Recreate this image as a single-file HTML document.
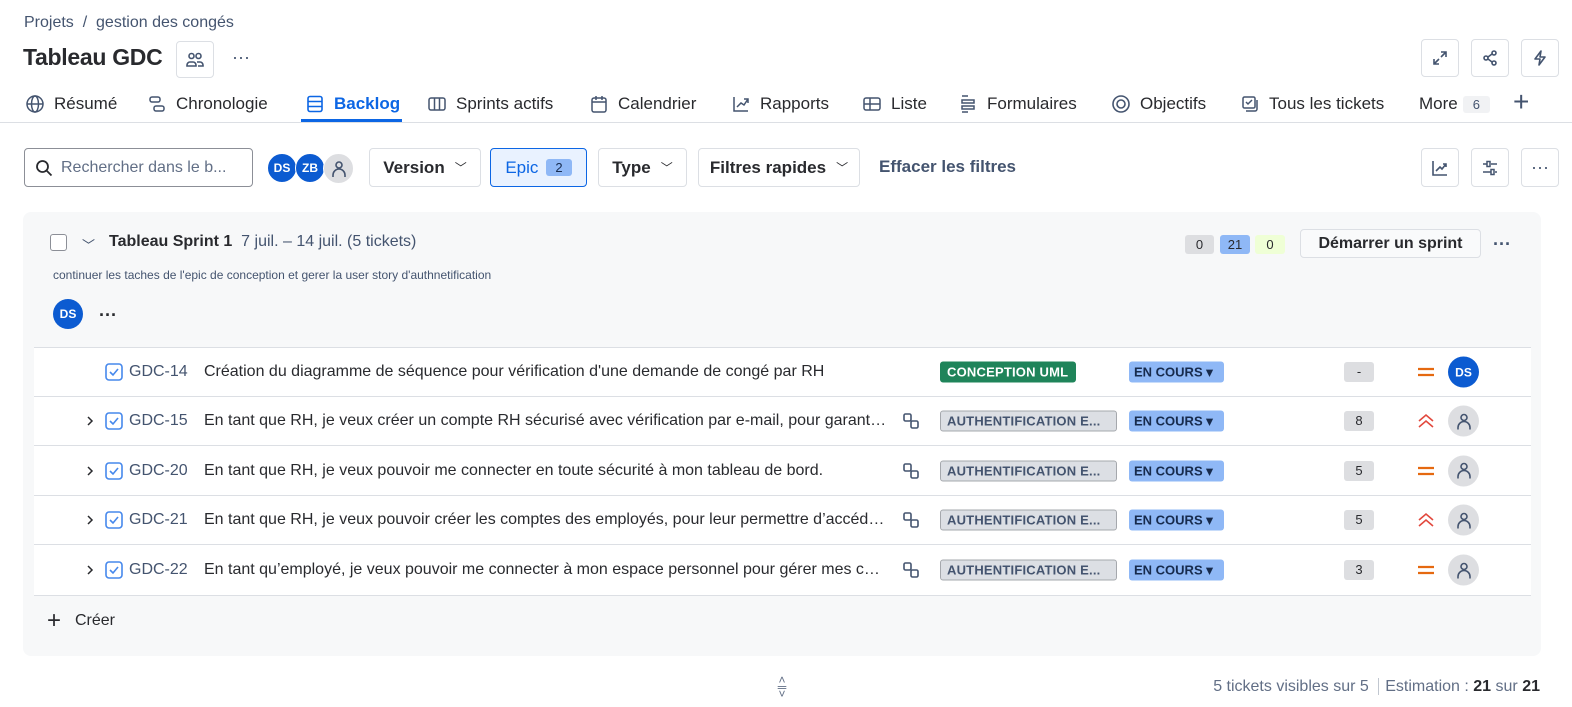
<!DOCTYPE html>
<html><head><meta charset="utf-8"><style>
*{box-sizing:border-box;margin:0;padding:0}
body{width:1572px;height:707px;overflow:hidden;background:#fff;font-family:"Segoe UI","Liberation Sans",sans-serif;color:#292a2e;position:relative;font-size:16px}
.a{position:absolute;white-space:nowrap}
.btn{position:absolute;border:1px solid #dcdfe4;border-radius:4px;background:#fff;display:flex;align-items:center;justify-content:center}
.tab{position:absolute;top:92px;height:24px;display:flex;align-items:center;font-size:17px;color:#292a2e;gap:9px}
.tab svg{width:20px;height:20px}
.av{position:absolute;border-radius:50%;background:#0c5bd1;color:#fff;font-weight:bold;font-size:12px;display:flex;align-items:center;justify-content:center}
.gp{position:absolute;border-radius:50%;background:#dddee1;display:flex;align-items:center;justify-content:center}
.row{position:absolute;left:34px;width:1497px;height:50px;border-bottom:1px solid #dcdfe4;background:#fff}
.row > *{position:absolute;top:50%;transform:translateY(-50%)}
.key{left:95px;font-size:16px;color:#44546f}
.sum{left:170px;font-size:16px;color:#292a2e;width:684px;overflow:hidden;text-overflow:ellipsis;white-space:nowrap}
.epic{left:906px;width:177px;height:21px;border:1px solid #a5a8ad;background:#dcdfe4;border-radius:3px;font-size:13px;font-weight:bold;color:#44546f;padding-left:6px;line-height:19px;letter-spacing:.2px}
.st{left:1095px;width:95px;height:21px;background:#8fb8f6;border-radius:3px;font-size:13px;font-weight:bold;color:#172b4d;padding-left:5px;line-height:21px}
.est{left:1310px;width:30px;height:20px;background:#dddee1;border-radius:3px;font-size:13px;text-align:center;line-height:20px;color:#292a2e}
.chev{left:50px}
.cb{left:71px}
.ch{left:868px}
.pr{left:1382px}
.pa{left:1414px;width:31px;height:31px}
</style></head><body>

<div class="a" style="left:24px;top:14px;font-size:16px;color:#44546f">Projets &nbsp;/&nbsp; gestion des congés</div>
<div class="a" style="left:23px;top:44px;font-size:23px;font-weight:bold;color:#292a2e;letter-spacing:-0.3px">Tableau GDC</div>
<div class="btn" style="left:176px;top:41px;width:38px;height:37px"><svg width="20" height="20" viewBox="0 0 20 20" fill="none" stroke="#44546f" stroke-width="1.6"><circle cx="6.5" cy="6" r="2.5"/><circle cx="13.5" cy="6" r="2.5"/><path d="M2 16v-1a3 3 0 0 1 3-3h3a3 3 0 0 1 3 3v1zM12 12h3a3 3 0 0 1 3 3v1h-5"/></svg></div>
<div class="a" style="left:232px;top:47px;font-size:18px;color:#44546f">···</div>

<div class="btn" style="left:1421px;top:39px;width:38px;height:38px"><svg width="18" height="18" viewBox="0 0 18 18" fill="none" stroke="#44546f" stroke-width="1.6"><path d="M10 3h5v5M15 3l-5 5M8 15H3v-5M3 15l5-5"/></svg></div>
<div class="btn" style="left:1471px;top:39px;width:38px;height:38px"><svg width="18" height="18" viewBox="0 0 18 18" fill="none" stroke="#44546f" stroke-width="1.6"><circle cx="13" cy="4" r="2"/><circle cx="5" cy="9" r="2"/><circle cx="13" cy="14" r="2"/><path d="M7 8l4-3M7 10l4 3"/></svg></div>
<div class="btn" style="left:1521px;top:39px;width:38px;height:38px"><svg width="18" height="18" viewBox="0 0 18 18" fill="none" stroke="#44546f" stroke-width="1.6" stroke-linejoin="round"><path d="M10 2L4 10h5l-1 6 6-8H9z"/></svg></div>

<!-- tabs -->
<div class="tab" style="left:25px"><svg viewBox="0 0 20 20" fill="none" stroke="#44546f" stroke-width="1.5"><circle cx="10" cy="10" r="8"/><ellipse cx="10" cy="10" rx="3.5" ry="8"/><path d="M2 10h16"/></svg>Résumé</div>
<div class="tab" style="left:147px"><svg viewBox="0 0 20 20" fill="none" stroke="#44546f" stroke-width="1.5"><rect x="3" y="3" width="10" height="5" rx="2"/><rect x="7" y="12" width="10" height="5" rx="2"/></svg>Chronologie</div>
<div class="tab" style="left:305px;color:#0c66e4;font-weight:600"><svg viewBox="0 0 20 20" fill="none" stroke="#0c66e4" stroke-width="1.6"><rect x="3" y="2.5" width="14" height="15" rx="2"/><path d="M3 7.5h14M3 12.5h14"/></svg>Backlog</div>
<div class="a" style="left:301px;top:119px;width:101px;height:3px;background:#0c66e4"></div>
<div class="tab" style="left:427px"><svg viewBox="0 0 20 20" fill="none" stroke="#44546f" stroke-width="1.5"><rect x="2" y="4" width="16" height="12" rx="2"/><path d="M7.5 4v12M12.5 4v12"/></svg>Sprints actifs</div>
<div class="tab" style="left:589px"><svg viewBox="0 0 20 20" fill="none" stroke="#44546f" stroke-width="1.5"><rect x="3" y="4" width="14" height="14" rx="2"/><path d="M3 8h14M7 2v4M13 2v4"/></svg>Calendrier</div>
<div class="tab" style="left:731px"><svg viewBox="0 0 20 20" fill="none" stroke="#44546f" stroke-width="1.5"><path d="M3 3v14h14M6 13l4-4 3 2 4-6M13 5h4v4"/></svg>Rapports</div>
<div class="tab" style="left:862px"><svg viewBox="0 0 20 20" fill="none" stroke="#44546f" stroke-width="1.5"><rect x="2" y="4" width="16" height="12" rx="2"/><path d="M2 10h16M8 4v12"/></svg>Liste</div>
<div class="tab" style="left:958px"><svg viewBox="0 0 20 20" fill="none" stroke="#44546f" stroke-width="1.5"><path d="M4 2h6M4 6h12v3H4zM4 12h12v3H4zM4 18h6"/></svg>Formulaires</div>
<div class="tab" style="left:1111px"><svg viewBox="0 0 20 20" fill="none" stroke="#44546f" stroke-width="1.6"><circle cx="10" cy="10" r="8"/><circle cx="10" cy="10" r="4"/></svg>Objectifs</div>
<div class="tab" style="left:1240px"><svg viewBox="0 0 20 20" fill="none" stroke="#44546f" stroke-width="1.5"><rect x="3" y="3" width="12" height="11" rx="1.5"/><path d="M6 8l2 2 4-4M6 17h9a2 2 0 0 0 2-2V6"/></svg>Tous les tickets</div>
<div class="tab" style="left:1419px">More<span style="background:#f1f2f4;font-size:13px;color:#44546f;padding:1px 10px;border-radius:3px;margin-left:-4px">6</span></div>
<div class="a" style="left:1513px;top:88px;font-size:28px;font-weight:200;color:#44546f;line-height:28px">+</div>
<div class="a" style="left:0;top:122px;width:1572px;height:1px;background:#dcdfe4"></div>

<!-- filters -->
<div class="btn" style="left:24px;top:148px;width:229px;height:39px;border-color:#8c8f97;justify-content:flex-start;padding-left:10px;gap:8px;font-size:16px;color:#626f86"><svg width="18" height="18" viewBox="0 0 18 18" fill="none" stroke="#292a2e" stroke-width="1.8"><circle cx="7.5" cy="7.5" r="5.5"/><path d="M11.5 11.5l5 5"/></svg>Rechercher dans le b...</div>
<div class="av" style="left:267px;top:153px;width:30px;height:30px;border:1px solid #fff">DS</div>
<div class="av" style="left:295px;top:153px;width:30px;height:30px;border:1px solid #fff">ZB</div>
<div class="gp" style="left:323px;top:153px;width:31px;height:31px;border:1px solid #fff"><svg width="18" height="18" viewBox="0 0 18 18" fill="none" stroke="#44546f" stroke-width="1.6"><circle cx="9" cy="5" r="3"/><path d="M3 17v-2a6 6 0 0 1 12 0v2"/></svg></div>
<div class="btn" style="left:369px;top:148px;width:112px;height:39px;font-size:17px;font-weight:600;gap:10px">Version <span style="font-size:12px;font-weight:normal">﹀</span></div>
<div class="btn" style="left:490px;top:148px;width:97px;height:39px;font-size:17px;background:#e9f2ff;border-color:#0c66e4;color:#0c66e4;gap:8px">Epic <span style="background:#8fb8f6;color:#172b4d;font-size:13px;padding:1px 9px;border-radius:3px">2</span></div>
<div class="btn" style="left:598px;top:148px;width:89px;height:39px;font-size:17px;font-weight:600;gap:10px">Type <span style="font-size:12px;font-weight:normal">﹀</span></div>
<div class="btn" style="left:698px;top:148px;width:162px;height:39px;font-size:17px;font-weight:600;gap:10px">Filtres rapides <span style="font-size:12px;font-weight:normal">﹀</span></div>
<div class="a" style="left:879px;top:157px;font-size:17px;font-weight:600;color:#44546f">Effacer les filtres</div>
<div class="btn" style="left:1421px;top:148px;width:38px;height:39px"><svg width="18" height="18" viewBox="0 0 18 18" fill="none" stroke="#44546f" stroke-width="1.6"><path d="M2 2v14h14M5 12l4-4 2 2 4-5M12 5h3v3"/></svg></div>
<div class="btn" style="left:1471px;top:148px;width:38px;height:39px"><svg width="18" height="18" viewBox="0 0 18 18" fill="none" stroke="#44546f" stroke-width="1.5"><path d="M2 5h4M10 5h6M2 13h8M14 13h2"/><rect x="6" y="2.5" width="3" height="5"/><rect x="10" y="10.5" width="3" height="5"/></svg></div>
<div class="btn" style="left:1521px;top:148px;width:38px;height:39px;font-size:18px;color:#44546f">···</div>

<!-- sprint -->
<div class="a" style="left:23px;top:212px;width:1518px;height:444px;background:#f7f8f9;border-radius:8px"></div>
<div class="a" style="left:50px;top:234px;width:17px;height:17px;border:1.5px solid #8c8f97;border-radius:3px;background:#fff"></div>
<div class="a" style="left:82px;top:235px;font-size:13px;color:#44546f">﹀</div>
<div class="a" style="left:109px;top:233px;font-size:16px"><b>Tableau Sprint 1</b> <span style="color:#44546f">&nbsp;7 juil. – 14 juil. (5 tickets)</span></div>
<div class="a" style="left:53px;top:268px;font-size:12px;color:#44546f">continuer les taches de l'epic de conception et gerer la user story d'authnetification</div>
<div class="av" style="left:53px;top:299px;width:30px;height:30px">DS</div>
<div class="a" style="left:99px;top:305px;font-size:18px;color:#292a2e;font-weight:bold">···</div>
<div class="a" style="left:1185px;top:235px;width:29px;height:19px;background:#dddee1;border-radius:3px;font-size:13px;text-align:center;line-height:19px">0</div>
<div class="a" style="left:1220px;top:235px;width:30px;height:19px;background:#8fb8f6;border-radius:3px;font-size:13px;text-align:center;line-height:19px">21</div>
<div class="a" style="left:1255px;top:235px;width:30px;height:19px;background:#efffd6;border-radius:3px;font-size:13px;text-align:center;line-height:19px">0</div>
<div class="btn" style="left:1300px;top:229px;width:181px;height:29px;font-size:16px;font-weight:600;background:#f9fafb">Démarrer un sprint</div>
<div class="a" style="left:1493px;top:234px;font-size:18px;color:#44546f;font-weight:bold">···</div>

<div class="a" style="left:34px;top:347px;width:1497px;height:249px;border:1px solid #dcdfe4;background:#fff"></div>

<svg width="0" height="0" style="position:absolute"><defs>
<symbol id="cbk" viewBox="0 0 18 18"><rect x="1" y="1" width="16" height="16" rx="3" fill="none" stroke="#4688ec" stroke-width="1.6"/><path d="M5 9l3 3 5-6" fill="none" stroke="#4688ec" stroke-width="1.6"/></symbol>
<symbol id="chl" viewBox="0 0 18 18"><rect x="2" y="2" width="7" height="7" rx="1.5" fill="none" stroke="#44546f" stroke-width="1.6"/><rect x="9" y="9" width="7" height="7" rx="1.5" fill="none" stroke="#44546f" stroke-width="1.6"/></symbol>
<symbol id="med" viewBox="0 0 20 20"><path d="M2 7h16M2 13h16" stroke="#e56910" stroke-width="2.2"/></symbol>
<symbol id="hi" viewBox="0 0 20 20"><path d="M3 10l7-6 7 6M3 16l7-6 7 6" fill="none" stroke="#e2483d" stroke-width="1.6"/></symbol>
<symbol id="usr" viewBox="0 0 18 18"><circle cx="9" cy="5" r="3" fill="none" stroke="#44546f" stroke-width="1.6"/><path d="M3 17v-2a6 6 0 0 1 12 0v2" fill="none" stroke="#44546f" stroke-width="1.6"/></symbol>
<symbol id="rch" viewBox="0 0 12 12"><path d="M4 2l4 4-4 4" fill="none" stroke="#292a2e" stroke-width="1.5"/></symbol>
</defs></svg>

<div class="row" style="top:348px;height:49px">
<svg class="cb" width="18" height="18"><use href="#cbk"/></svg>
<span class="key">GDC-14</span><span class="sum">Création du diagramme de séquence pour vérification d'une demande de congé par RH</span>
<span class="epic" style="width:136px;background:#1f845a;border-color:#1f845a;color:#fff">CONCEPTION UML</span>
<span class="st">EN COURS ▾</span><span class="est">-</span>
<svg class="pr" width="20" height="20"><use href="#med"/></svg>
<span class="av pa" style="position:absolute">DS</span>
</div>

<div class="row" style="top:397px;height:49px">
<svg class="chev" width="12" height="12"><use href="#rch"/></svg>
<svg class="cb" width="18" height="18"><use href="#cbk"/></svg>
<span class="key">GDC-15</span><span class="sum">En tant que RH, je veux créer un compte RH sécurisé avec vérification par e-mail, pour garantir l'accès</span>
<svg class="ch" width="18" height="18"><use href="#chl"/></svg>
<span class="epic">AUTHENTIFICATION E...</span><span class="st">EN COURS ▾</span><span class="est">8</span>
<svg class="pr" width="20" height="20"><use href="#hi"/></svg>
<span class="gp pa"><svg width="18" height="18"><use href="#usr"/></svg></span>
</div>

<div class="row" style="top:446px">
<svg class="chev" width="12" height="12"><use href="#rch"/></svg>
<svg class="cb" width="18" height="18"><use href="#cbk"/></svg>
<span class="key">GDC-20</span><span class="sum">En tant que RH, je veux pouvoir me connecter en toute sécurité à mon tableau de bord.</span>
<svg class="ch" width="18" height="18"><use href="#chl"/></svg>
<span class="epic">AUTHENTIFICATION E...</span><span class="st">EN COURS ▾</span><span class="est">5</span>
<svg class="pr" width="20" height="20"><use href="#med"/></svg>
<span class="gp pa"><svg width="18" height="18"><use href="#usr"/></svg></span>
</div>

<div class="row" style="top:496px;height:49px">
<svg class="chev" width="12" height="12"><use href="#rch"/></svg>
<svg class="cb" width="18" height="18"><use href="#cbk"/></svg>
<span class="key">GDC-21</span><span class="sum">En tant que RH, je veux pouvoir créer les comptes des employés, pour leur permettre d’accéder à leur espace</span>
<svg class="ch" width="18" height="18"><use href="#chl"/></svg>
<span class="epic">AUTHENTIFICATION E...</span><span class="st">EN COURS ▾</span><span class="est">5</span>
<svg class="pr" width="20" height="20"><use href="#hi"/></svg>
<span class="gp pa"><svg width="18" height="18"><use href="#usr"/></svg></span>
</div>

<div class="row" style="top:545px;border-bottom:none">
<svg class="chev" width="12" height="12"><use href="#rch"/></svg>
<svg class="cb" width="18" height="18"><use href="#cbk"/></svg>
<span class="key">GDC-22</span><span class="sum">En tant qu’employé, je veux pouvoir me connecter à mon espace personnel pour gérer mes congés</span>
<svg class="ch" width="18" height="18"><use href="#chl"/></svg>
<span class="epic">AUTHENTIFICATION E...</span><span class="st">EN COURS ▾</span><span class="est">3</span>
<svg class="pr" width="20" height="20"><use href="#med"/></svg>
<span class="gp pa"><svg width="18" height="18"><use href="#usr"/></svg></span>
</div>

<div class="a" style="left:47px;top:608px;font-size:24px;font-weight:300;color:#292a2e;line-height:26px">+</div>
<div class="a" style="left:75px;top:612px;font-size:16px;color:#292a2e">Créer</div>

<div class="a" style="left:773px;top:677px;font-size:12px;color:#626f86;line-height:7px;text-align:center;width:18px">˄<br>═<br>˅</div>
<div class="a" style="right:32px;top:678px;font-size:16px;color:#626f86">5 tickets visibles sur 5 <span style="border-left:1px solid #c1c7d0;margin:0 6px 0 5px"></span> Estimation : <b style="color:#292a2e">21</b> sur <b style="color:#292a2e">21</b></div>
</body></html>
